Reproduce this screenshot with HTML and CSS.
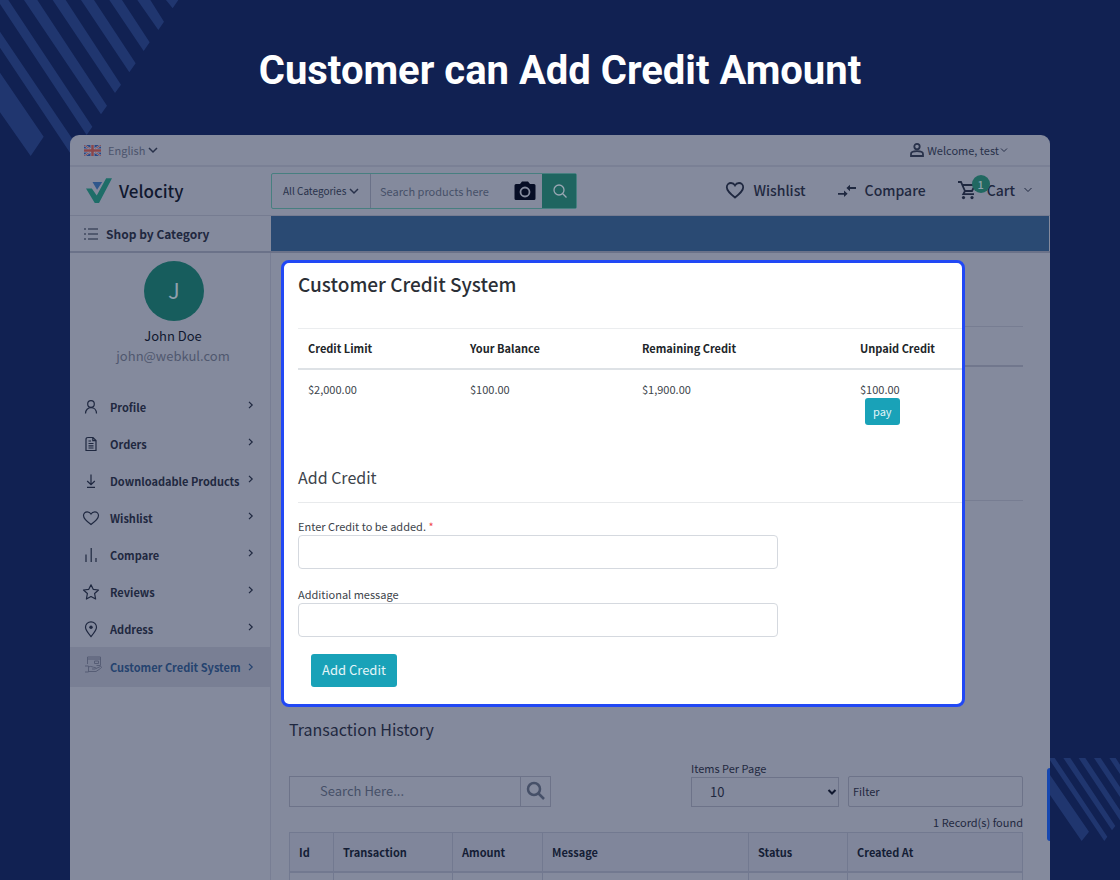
FILE: index.html
```html
<!DOCTYPE html>
<html lang="en">
<head>
<meta charset="utf-8">
<title>Customer can Add Credit Amount</title>
<link rel="stylesheet" href="styles.css">
</head>
<body>
<svg class="stripes stripes-top" viewBox="0 0 540 470" aria-hidden="true">
  <path d="M498 0H535L518 25ZM412 0H451L492 65 475 90ZM328 0H366L449 127 431 153ZM243 0H282L407 190 388 217ZM158 0H197L363 254 345 279ZM72 0H112L321 317 303 343ZM0 0H25L277 380 260 405 0 12ZM0 95L235 443 217 469 0 143ZM0 218L131 410 92 468 0 337Z"/>
</svg>
<svg class="stripes stripes-bottom" viewBox="0 0 210 250" aria-hidden="true">
  <path d="M0 51L117 221 95 249 0 111ZM0 0H14L172 236 163 249 0 7ZM40 0H61L196 204 186 217ZM86 0H106L210 157V187ZM132 0H152L210 87V117ZM178 0H197L210 20V48Z"/>
</svg>
<h1 class="headline">Customer can Add Credit Amount</h1>

<div class="window">
  <div class="topbar">
    <button class="plain language" type="button">
      <svg class="flag" viewBox="0 0 34 22" aria-hidden="true"><path fill="#2a4784" d="M0 0h34v22H0z"/><path stroke="#8d95ab" stroke-width="4" d="M0 0l34 22M34 0L0 22"/><path stroke="#87494f" stroke-width="2" d="M0 0l34 22M34 0L0 22"/><path stroke="#8d95ab" stroke-width="8" d="M17 0v22M0 11h34"/><path stroke="#8a4549" stroke-width="5" d="M17 0v22M0 11h34"/></svg>
      <span>English</span>
      <svg class="chev" viewBox="0 0 10 10"><path d="M1 3l4 4 4-4"/></svg>
    </button>
    <button class="plain account" type="button">
      <svg class="person" viewBox="0 0 14 14"><circle cx="7" cy="3.600" r="2.700"/><path d="M1 13v-2c0-2 3.500-2.800 6-2.800s6 .8 6 2.800v2z"/></svg>
      <span>Welcome, test</span>
      <svg class="chev thin" viewBox="0 0 10 10"><path d="M2 3.500l3 3 3-3"/></svg>
    </button>
  </div>

  <header class="header">
    <a class="brand" href="#">
      <svg class="logo" viewBox="0 0 80 78" aria-hidden="true"><path fill="#1e6d68" d="M0 31h18l15 22L62 0h18L40 76H27z"/><path fill="#2f578c" d="M20 11h30L34 35z"/></svg>
      <span>Velocity</span>
    </a>
    <form class="search">
      <button class="plain categories" type="button">All Categories <svg class="chev" viewBox="0 0 10 10"><path d="M1 3l4 4 4-4"/></svg></button>
      <input class="search-field" type="text" placeholder="Search products here" aria-label="Search products">
      <button class="plain camera" type="button" aria-label="Search by image">
        <svg viewBox="0 0 22 20"><path fill="#060d25" d="M2 3h4l2-2.500h6L16 3h4q1.500 0 1.500 1.500v13q0 1.500-1.500 1.500H2Q.5 19 .5 17.500v-13Q.5 3 2 3z"/><circle cx="11" cy="11" r="4.500" fill="none" stroke="#848a9d" stroke-width="1.800"/></svg>
      </button>
      <button class="search-go" type="button" aria-label="Search">
        <svg viewBox="0 0 14 14"><circle cx="6" cy="6" r="5"/><path d="M9.800 9.800L13.500 13.500"/></svg>
      </button>
    </form>
    <nav class="tools">
      <a href="#"><svg class="icon-lg" viewBox="0 0 20 20"><path d="M10 17.500C5 13.500 1.800 10.800 1.800 7.200 1.800 4.600 3.800 3 6 3c1.800 0 3.200 1 4 2.400C10.800 4 12.200 3 14 3c2.200 0 4.200 1.600 4.200 4.200 0 3.600-3.200 6.300-8.200 10.300z"/></svg><span>Wishlist</span></a>
      <a href="#"><svg class="icon-lg" viewBox="0 0 20 20"><path d="M1 13.800h7M12 8h7"/><path class="solid" d="M7 10.600v6.400l3.600-3.200zM13 4.800v6.400L9.400 8z"/></svg><span>Compare</span></a>
      <a class="cart" href="#"><svg class="icon-lg" viewBox="0 0 20 20"><path d="M1 2h3l4 9h7l3-6H5.500M8 11l-1.700 3.200H17"/><circle class="solid" cx="6.500" cy="17.600" r="1.600"/><circle class="solid" cx="15" cy="17.600" r="1.600"/></svg><span class="badge">1</span><span>Cart</span><svg class="chev thin" viewBox="0 0 10 10"><path d="M1.500 3L5 6.500 8.500 3"/></svg></a>
    </nav>
  </header>

  <div class="navbar">
    <button class="plain shop" type="button"><svg viewBox="0 0 14 14"><path d="M4 2h10M4 7h10M4 12h10M0 2h2M0 7h2M0 12h2"/></svg><span>Shop by Category</span></button>
    <div class="navfill"></div>
  </div>

  <div class="body">
    <aside class="sidebar">
      <div class="avatar">J</div>
      <div class="name">John Doe</div>
      <div class="email">john@webkul.com</div>
      <ul class="menu">
        <li><a href="#"><svg class="icon" viewBox="0 0 18 18"><circle cx="9" cy="6" r="3.300"/><path d="M3.500 15.500c0-3.500 2.500-5.800 5.500-5.800s5.500 2.300 5.500 5.800"/></svg><span>Profile</span><svg class="arrow" viewBox="0 0 8 8"><path d="M2 .8L5.200 4 2 7.200"/></svg></a></li>
        <li><a href="#"><svg class="icon" viewBox="0 0 18 18"><path d="M6 2.500h5L14 5.500v10H4v-11q0-2 2-2zM10.800 2.500v3.200H14M6.500 6h2.500M6.500 8.500h5M6.500 10.800h5M6.500 13h5"/></svg><span>Orders</span><svg class="arrow" viewBox="0 0 8 8"><path d="M2 .8L5.200 4 2 7.200"/></svg></a></li>
        <li><a href="#"><svg class="icon" viewBox="0 0 18 18"><path d="M9 2.500v10M5.200 9L9 12.700 12.800 9M5 15.300h8"/></svg><span>Downloadable Products</span><svg class="arrow" viewBox="0 0 8 8"><path d="M2 .8L5.200 4 2 7.200"/></svg></a></li>
        <li><a href="#"><svg class="icon" viewBox="0 0 18 18"><path d="M9 15.500C4 12 1.500 9.600 1.500 6.600 1.500 4.400 3.200 2.800 5.200 2.800 6.900 2.800 8.200 3.600 9 5c.8-1.400 2.100-2.200 3.800-2.200 2 0 3.700 1.600 3.700 3.800 0 3-2.500 5.400-7.500 8.900z"/></svg><span>Wishlist</span><svg class="arrow" viewBox="0 0 8 8"><path d="M2 .8L5.200 4 2 7.200"/></svg></a></li>
        <li><a href="#"><svg class="icon" viewBox="0 0 18 18"><path d="M4 8.500V16M9.200 2v14M14 12v4"/></svg><span>Compare</span><svg class="arrow" viewBox="0 0 8 8"><path d="M2 .8L5.200 4 2 7.200"/></svg></a></li>
        <li><a href="#"><svg class="icon" viewBox="0 0 18 18"><path stroke-linejoin="round" d="M9 1.800l2.200 4.500 5.300.7-3.900 3.500 1 5.500L9 13.500 4.400 16l1-5.500L1.500 7l5.300-.7z"/></svg><span>Reviews</span><svg class="arrow" viewBox="0 0 8 8"><path d="M2 .8L5.200 4 2 7.200"/></svg></a></li>
        <li><a href="#"><svg class="icon" viewBox="0 0 18 18"><path d="M9 16.500C6 13 3.500 10.300 3.500 7.300a5.500 5.500 0 0 1 11 0c0 3-2.500 5.700-5.500 9.200z"/><circle class="solid" cx="9" cy="7.300" r="1.700"/></svg><span>Address</span><svg class="arrow" viewBox="0 0 8 8"><path d="M2 .8L5.200 4 2 7.200"/></svg></a></li>
        <li class="active"><a href="#"><svg class="icon faded" viewBox="0 0 18 18"><path d="M3.500 9V2h13v8.500h-4M3.500 4h13M10.500 6h4v2.500h-4zM1 11h3.500v6H1M4.500 12c3-1.500 4 .5 6.500.5 1.500 0 1 1.500 0 1.500H8M12 13.500l4.500-2c1.500 0 1 1.500 0 2L12 16.500H4.500"/></svg><span>Customer Credit System</span><svg class="arrow" viewBox="0 0 8 8"><path d="M2 .8L5.200 4 2 7.200"/></svg></a></li>
      </ul>
    </aside>

    <main class="main">
      <div class="stack">
        <div class="backdrop" aria-hidden="true"><div></div><div></div><div></div></div>
        <section class="panel">
          <h2>Customer Credit System</h2>
          <table class="credit">
            <colgroup><col class="c1"><col class="c2"><col class="c3"><col></colgroup>
            <thead><tr><th>Credit Limit</th><th>Your Balance</th><th>Remaining Credit</th><th>Unpaid Credit</th></tr></thead>
            <tbody><tr><td>$2,000.00</td><td>$100.00</td><td>$1,900.00</td><td>$100.00<button class="pay" type="button">pay</button></td></tr></tbody>
          </table>
          <h3>Add Credit</h3>
          <form class="add-form">
            <label for="amount">Enter Credit to be added. <span class="required">*</span></label>
            <input id="amount" type="text">
            <label for="message">Additional message</label>
            <input id="message" type="text">
            <button class="add" type="button">Add Credit</button>
          </form>
        </section>
      </div>

      <section class="history">
        <h3>Transaction History</h3>
        <div class="controls">
          <div class="find">
            <input type="text" placeholder="Search Here..." aria-label="Search transactions">
            <button class="plain" type="button" aria-label="Find"><svg viewBox="0 0 20 20"><circle cx="8" cy="8" r="6"/><path d="M12.500 12.500L18 18"/></svg></button>
          </div>
          <div class="per-page">
            <label for="per-page">Items Per Page</label>
            <div class="select-wrap">
              <select id="per-page"><option>10</option></select>
              <svg class="chev bold" viewBox="0 0 10 10"><path d="M1.500 3L5 6.500 8.500 3"/></svg>
            </div>
          </div>
          <button class="filter" type="button">Filter</button>
        </div>
        <div class="records">1 Record(s) found</div>
        <table class="log">
          <colgroup><col class="l1"><col class="l2"><col class="l3"><col><col class="l5"><col class="l6"></colgroup>
          <thead><tr><th>Id</th><th>Transaction</th><th>Amount</th><th>Message</th><th>Status</th><th>Created At</th></tr></thead>
          <tbody><tr><td></td><td></td><td></td><td></td><td></td><td></td></tr></tbody>
        </table>
      </section>
    </main>
  </div>
  <div class="side-tab"></div>
</div>
</body>
</html>
```
FILE: styles.css
```css
* { box-sizing: border-box; }
body {
  margin: 0;
  height: 100vh;
  overflow: hidden;
  position: relative;
  display: flex;
  flex-direction: column;
  background: #112152;
  color: #1f2840;
  font: 11px/20px "Noto Sans CJK SC", "Noto Sans", sans-serif;
}
h1, h2, h3, ul { margin: 0; padding: 0; }
a { color: inherit; text-decoration: none; }
button, input, select { font: inherit; color: inherit; margin: 0; }
svg { display: block; flex: none; fill: none; stroke: currentColor; }
.solid { fill: currentColor; stroke: none; }
.plain { background: none; border: 0; padding: 0; display: flex; align-items: center; white-space: nowrap; }

.stripes { position: absolute; fill: #20366f; stroke: none; }
.stripes-top { left: 0; top: 0; width: 180px; }
.stripes-bottom { right: 0; top: 758px; width: 70px; }

.headline {
  padding: 47px 0 40px;
  text-align: center;
  color: #fff;
  font: 700 40px/48px Roboto, sans-serif;
}

.window {
  position: relative;
  flex: 1;
  min-height: 0;
  margin: 0 70px;
  overflow: hidden;
  display: flex;
  flex-direction: column;
  border-radius: 9px 9px 0 0;
  background: #848a9d;
}
.chev { width: 10px; height: 10px; stroke-width: 1.5; }
.chev.thin { stroke-width: 1; }
.chev.bold { stroke-width: 2; color: #10182f; }

.topbar {
  display: flex;
  justify-content: space-between;
  height: 32px;
  padding: 0 41px 0 14px;
  border-bottom: 2px solid #7a8095;
}
.language { color: #4c546c; }
.flag { width: 17px; height: 11px; margin-right: 7px; stroke: none; }
.language .chev { margin-left: 3px; color: #28314a; }
.account { color: #28314a; }
.person { width: 14px; height: 14px; margin-right: 3px; stroke-width: 1.8; }

.header { display: flex; align-items: center; height: 49px; border-bottom: 1px solid #767c91; }
.brand {
  display: flex;
  align-items: center;
  gap: 7px;
  width: 201px;
  padding-left: 16px;
  font-size: 17px;
  font-weight: 500;
  color: #10182f;
}
.logo { width: 26px; height: 26px; stroke: none; }
.search {
  display: flex;
  width: 306px;
  height: 36px;
  border: 1px solid #477f80;
  border-radius: 2px;
}
.categories { width: 99px; padding-left: 11px; gap: 3px; font-size: 10px; border-right: 1px solid #6a7188; color: #28314a; }
.search-field { flex: 1; min-width: 0; padding: 0 0 0 9px; border: 0; background: none; outline: 0; }
.search-field::placeholder, .find input::placeholder { color: #465068; opacity: 1; }
.camera { width: 28px; }
.camera svg { width: 22px; height: 20px; stroke: none; }
.search-go { width: 34px; padding: 0 0 0 11px; border: 0; background: #1f6560; color: #9aa7b3; }
.search-go svg { width: 14px; height: 14px; stroke-width: 1.3; }
.tools {
  display: flex;
  gap: 31px;
  margin-left: auto;
  padding: 0 17px 2px 0;
  font-size: 14px;
  font-weight: 500;
}
.tools a { display: flex; align-items: center; position: relative; }
.icon-lg { width: 20px; height: 20px; margin-right: 8px; stroke-width: 1.8; }
.cart .icon-lg { margin-right: 10px; }
.cart .chev { margin-left: 8px; }
.badge {
  position: absolute;
  left: 15px;
  top: -5px;
  width: 18px;
  height: 18px;
  border-radius: 50%;
  background: #216861;
  color: #8fa3ae;
  font-size: 11px;
  line-height: 18px;
  text-align: center;
}

.navbar { display: flex; height: 37px; padding-right: 1px; border-bottom: 2px solid #6b7289; }
.shop { width: 201px; padding-left: 14px; gap: 8px; font-size: 12px; font-weight: 600; }
.shop svg { width: 14px; height: 14px; }
.navfill { flex: 1; background: #2a4a73; }

.body { display: flex; flex: 1; min-height: 0; }
.sidebar { width: 201px; flex: none; border-right: 1px solid #787e94; text-align: center; }
.avatar {
  width: 60px;
  height: 60px;
  margin: 8px auto 5px 74px;
  border-radius: 50%;
  background: #175d5d;
  color: #8fa0ad;
  font-size: 22px;
  line-height: 56px;
}
.name { padding: 0 6px 0 12px; font-size: 13px; color: #10182f; }
.email { padding-left: 6px; font-size: 13px; color: #50586f; }
.menu { list-style: none; margin-top: 22px; text-align: left; font-weight: 600; }
.menu a { display: flex; align-items: center; height: 37px; padding: 0 15px 0 12px; white-space: nowrap; }
.icon { width: 18px; height: 18px; margin-right: 10px; stroke-width: 1.2; }
.arrow { width: 8px; height: 8px; margin: 0 0 4px auto; stroke-width: 1.2; }
.menu .active a { height: 40px; background: #797f94; color: #25436f; }
.active .icon { margin: 0 8px 6px 2px; stroke-width: 1; }
.active .arrow { margin-bottom: 0; }
.icon.faded { color: #565d75; }

.main { flex: 1; min-width: 0; padding: 7px 27px 0 10px; }
.stack { display: grid; }
.backdrop, .panel { grid-area: 1 / 1; }
.backdrop div { border-bottom: 1px solid #777d92; }
.backdrop div:nth-child(1) { height: 67px; }
.backdrop div:nth-child(2) { height: 40px; border-bottom: 2px solid #71778d; }
.backdrop div:nth-child(3) { height: 134px; }
.panel {
  position: relative;
  margin-right: 58px;
  padding: 9px 0 17px 14px;
  border: 3px solid #2148f5;
  border-radius: 8px;
  background: #fff;
  color: #3d444b;
}
.panel h2 { font-size: 19px; font-weight: 500; line-height: 24px; color: #2b2f36; }
.credit { width: 100%; margin-top: 32px; border-collapse: collapse; table-layout: fixed; text-align: left; }
.credit th { height: 40px; padding: 0 10px; border-top: 1px solid #ebedef; border-bottom: 2px solid #dee2e6; color: #212529; }
.credit td { height: 68px; padding: 9px 10px 0; vertical-align: top; }
.c1 { width: 162px; }
.c2 { width: 172px; }
.c3 { width: 218px; }
.pay, .add { border: 0; border-radius: 3px; background: #19a2b8; color: #e4f5f8; }
.pay { display: block; height: 27px; margin: -1px 0 0 5px; padding: 0 8px; }
.panel h3, .history h3 { font-size: 16px; font-weight: 400; line-height: 24px; }
.panel h3 { margin-top: 28px; padding-bottom: 13px; border-bottom: 1px solid #e8eaec; }
.add-form { display: flex; flex-direction: column; align-items: flex-start; padding-top: 14px; }
.add-form label { line-height: 18px; }
.required { color: #f04a4a; }
.add-form input { width: 480px; max-width: 100%; height: 34px; margin-bottom: 16px; padding: 0 10px; border: 1px solid #d5d9df; border-radius: 4px; background: #fff; }
.add { height: 33px; margin: 1px 0 0 13px; padding: 0 11px; font-size: 13px; }

.history { padding-left: 8px; }
.history h3 { margin-top: 10px; }
.controls { display: flex; align-items: flex-end; margin-top: 18px; }
.find { display: flex; width: 262px; height: 31px; border: 1px solid #6d7389; color: #465068; font-size: 13px; }
.find input { flex: 1; min-width: 0; padding: 0 0 0 30px; border: 0; background: none; }
.find button { width: 30px; padding-left: 5px; border-left: 1px solid #6d7389; }
.find svg { width: 20px; height: 20px; stroke-width: 2.5; }
.per-page { width: 148px; margin-left: auto; }
.per-page label { display: block; line-height: 18px; }
.select-wrap { display: grid; align-items: center; }
.select-wrap > * { grid-area: 1 / 1; }
.select-wrap .chev { justify-self: end; margin-right: 2px; pointer-events: none; }
.per-page select { width: 100%; height: 30px; padding: 0 0 0 18px; appearance: none; border: 1px solid #6d7389; border-radius: 0; background: none; font-size: 13px; }
.filter { width: 175px; height: 31px; margin-left: 9px; padding: 0 4px; border: 1px solid #6d7389; border-radius: 2px; background: none; text-align: left; }
.records { padding-top: 5px; text-align: right; }
.log { width: 100%; border-collapse: collapse; table-layout: fixed; text-align: left; }
.log th, .log td { height: 40px; padding: 0 9px; border: 1px solid #727990; }
.log th { background: #80869b; border-bottom-width: 2px; color: #141d35; }
.l1 { width: 44px; }
.l2 { width: 119px; }
.l3 { width: 90px; }
.l5 { width: 99px; }
.l6 { width: 175px; }
.side-tab { position: absolute; right: 0; top: 633px; width: 3px; height: 73px; border-radius: 3px 0 0 3px; background: #1647b0; }
```
